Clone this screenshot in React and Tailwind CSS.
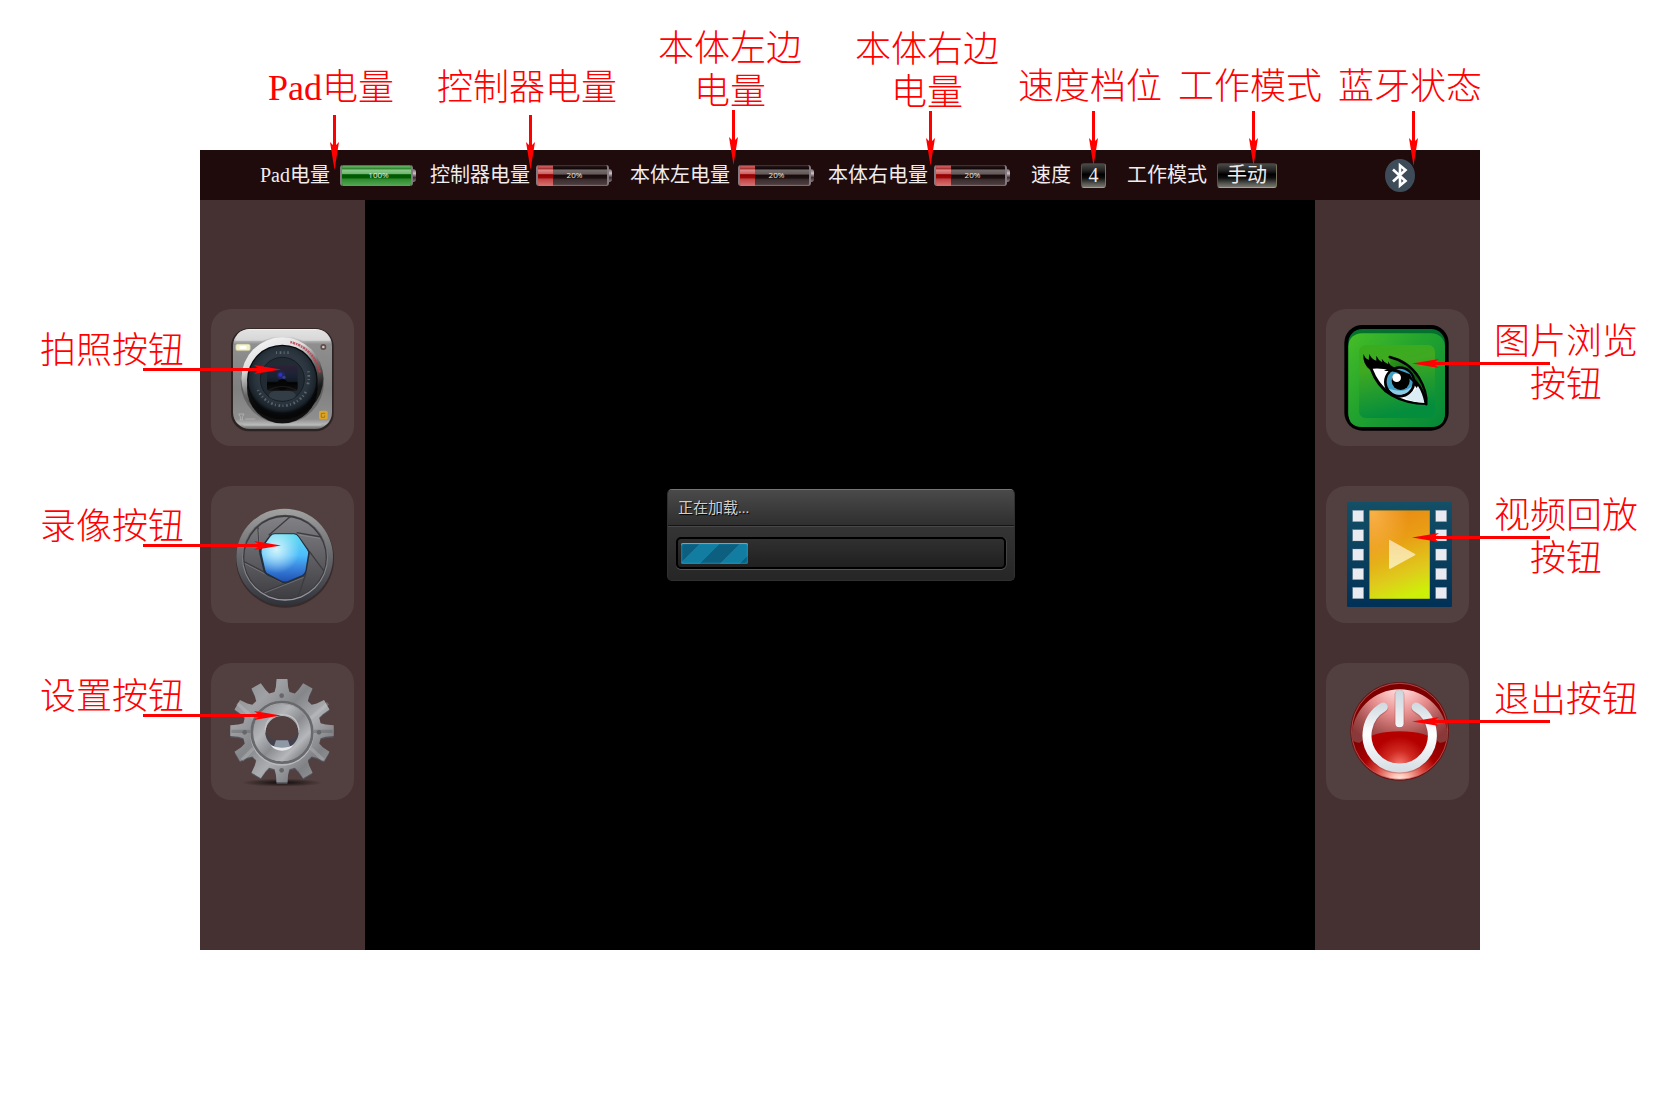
import React from "react";

const TOP_NOTES = [
  { lines: ["Pad电量"], box: "pt-[67px] ml-[68px]", arrow: "mt-[5px]" },
  { lines: ["控制器电量"], box: "pt-[67px] ml-[43px]", arrow: "mt-[5px]" },
  { lines: ["本体左边", "电量"], box: "pt-[28px] ml-[41px]", arrow: "-mt-1" },
  { lines: ["本体右边", "电量"], box: "pt-[29px] ml-[53px]", arrow: "-mt-1" },
  { lines: ["速度档位"], box: "pt-[66px] ml-[19px]", arrow: "mt-0.5" },
  { lines: ["工作模式"], box: "pt-[66px] ml-4", arrow: "mt-0.5" },
  { lines: ["蓝牙状态"], box: "pt-[66px] ml-4", arrow: "mt-0.5" },
];

function DownArrow({ className }) {
  return (
    <svg className={`ml-[7px] block h-[55px] w-[9px] ${className}`} viewBox="0 0 9 55" aria-hidden="true">
      <path d="M3 0h3v30l3-3-4.500 28L0 27l3 3z" fill="#f00" />
    </svg>
  );
}

function SideArrow({ flip, className }) {
  return (
    <svg
      className={`pointer-events-none absolute h-[9px] w-[138px] ${className}`}
      viewBox="0 0 138 9"
      aria-hidden="true"
    >
      <path
        d={flip ? "M138 3v3H23l4 3L0 4.500 27 0l-4 3z" : "M0 3v3h115l-4 3 27-4.500L111 0l4 3z"}
        fill="#f00"
      />
    </svg>
  );
}

function Battery({ value, label }) {
  const full = value > 50;
  const fill = full
    ? "bg-[linear-gradient(180deg,#247a24_0%,#63b063_8%,#2c842c_18%,#8cc98c_24%,#70b570_42%,#005a00_46%,#005a00_60%,#2f8a2f_68%,#55a955_100%)]"
    : "bg-[linear-gradient(180deg,#8e2020_0%,#d06060_8%,#a33030_18%,#e08d8d_24%,#cf6060_42%,#900000_46%,#a00808_60%,#c04444_68%,#d87474_100%)]";
  return (
    <div
      role="meter"
      aria-label={label}
      aria-valuenow={value}
      aria-valuemin={0}
      aria-valuemax={100}
      className="flex h-[21px] w-[76px] shrink-0 items-center"
    >
      <div className="relative h-[21px] w-[73px] overflow-hidden rounded-[3px] border-x-2 border-[#83797e] bg-[linear-gradient(180deg,#4a3f41_0%,#1d1011_8%,#120708_18%,#736b6b_24%,#645858_44%,#150a0b_47%,#1d1011_62%,#3c2e30_70%,#4b3c3e_92%,#8a7f80_100%)]">
        <div className={`h-full ${fill}`} style={{ width: `${full ? 100 : value + 2}%` }} />
        <span className="absolute inset-0 flex items-center justify-center pl-1 font-['Open_Sans',sans-serif] text-[8px] leading-none text-[#eee8e8]">
          {value}%
        </span>
      </div>
      <div className="h-[13px] w-[3px] rounded-r-[3px] bg-[linear-gradient(180deg,#6e6266,#c9bfc6,#3a2c30,#8d8288)]" />
    </div>
  );
}

function CameraIcon() {
  return (
    <svg viewBox="543 57 429 411" className="size-full" aria-hidden="true">
      <defs>
        <linearGradient id="camBody" x1="0" y1="0" x2="0" y2="1">
          <stop offset="0" stopColor="#f2f2f2" />
          <stop offset=".1" stopColor="#c9c9c9" />
          <stop offset=".15" stopColor="#8f8f8f" />
          <stop offset=".6" stopColor="#808080" />
          <stop offset=".9" stopColor="#8f8f8f" />
          <stop offset=".95" stopColor="#b5b5b5" />
          <stop offset="1" stopColor="#6a6a6a" />
        </linearGradient>
        <linearGradient id="camRing" x1="0" y1="0" x2=".45" y2="1">
          <stop offset="0" stopColor="#ffffff" />
          <stop offset=".35" stopColor="#dedede" />
          <stop offset=".6" stopColor="#6d6d6d" />
          <stop offset=".85" stopColor="#1a1a1a" />
        </linearGradient>
        <radialGradient id="camLens" cx=".5" cy=".45" r=".55">
          <stop offset="0" stopColor="#1b222a" />
          <stop offset=".6" stopColor="#2f3943" />
          <stop offset=".75" stopColor="#28323b" />
          <stop offset=".9" stopColor="#1c242b" />
          <stop offset="1" stopColor="#05070a" />
        </radialGradient>
        <linearGradient id="camCore" x1="0" y1="0" x2="0" y2="1">
          <stop offset="0" stopColor="#2d2138" />
          <stop offset=".4" stopColor="#182233" />
          <stop offset=".62" stopColor="#141b24" />
          <stop offset=".68" stopColor="#020203" />
          <stop offset="1" stopColor="#101010" />
        </linearGradient>
      </defs>
      <rect x="603" y="115" width="308" height="309" rx="54" fill="#2c2323" />
      <rect x="609" y="117" width="297" height="300" rx="50" fill="url(#camBody)" />
      <path d="M616 152h82l30-12h60l30 12h82q-4-32-40-33H654q-36 2-38 33z" fill="#dedede" opacity=".75" />
      <circle cx="757" cy="276" r="125" fill="#000" opacity=".25" />
      <circle cx="757" cy="265" r="123" fill="url(#camRing)" />
      <circle cx="757" cy="294" r="106" fill="#050505" opacity=".9" />
      <circle cx="757" cy="270" r="106" fill="#080b0e" />
      <circle cx="757" cy="270" r="102" fill="url(#camLens)" />
      <path d="M684 300a80 80 0 0 0 146 0M738 188h38M835 244q4 22-3 44" fill="none" stroke="#9aa4ae" strokeWidth="8" strokeDasharray="3 8 5 7" opacity=".45" />
      <circle cx="757" cy="268" r="66" fill="#222b33" stroke="#161c22" strokeWidth="3" />
      <ellipse cx="757" cy="316" rx="40" ry="16" fill="#333d46" />
      <rect x="711" y="228" width="92" height="74" rx="8" fill="url(#camCore)" />
      <circle cx="757" cy="284" r="17" fill="#060606" />
      <path d="M716 300q41-22 82 0" fill="none" stroke="#262626" strokeWidth="2" />
      <circle cx="753" cy="256" r="12" fill="#232a78" opacity=".6" />
      <circle cx="751" cy="254" r="6" fill="#3030cc" />
      <circle cx="762" cy="262" r="5" fill="#373e8d" />
      <path d="M781 156q70 18 89 92" fill="none" stroke="#bd3c49" strokeWidth="7" strokeDasharray="5 2 8 2" opacity=".8" />
      <rect x="617" y="162" width="44" height="20" rx="6" fill="#f1f0c6" stroke="#b9b79a" strokeWidth="2" />
      <rect x="628" y="167" width="22" height="10" rx="4" fill="#fffff5" />
      <circle cx="880" cy="171" r="9" fill="#5a4f4f" />
      <circle cx="880" cy="171" r="4" fill="#e7bcbc" />
      <rect x="867" y="362" width="26" height="26" rx="5" fill="#dba42a" />
      <path d="M886 370h-12v12h10v-6" fill="none" stroke="#a8770f" strokeWidth="3" />
      <path d="M626 372h16l-5 8v10h-6v-10zM646 387h30" fill="none" stroke="#bdbdbd" strokeWidth="2" />
      <path d="M640 405h234" stroke="#cfcfcf" strokeWidth="2" />
    </svg>
  );
}

function ApertureIcon() {
  return (
    <svg viewBox="543 48 429 411" className="size-full" aria-hidden="true">
      <defs>
        <linearGradient id="apRim" x1="0" y1="0" x2="0" y2="1">
          <stop offset="0" stopColor="#a2a2a2" />
          <stop offset=".5" stopColor="#66676b" />
          <stop offset="1" stopColor="#30323a" />
        </linearGradient>
        <linearGradient id="apInnerRim" x1="0" y1="0" x2="0" y2="1">
          <stop offset="0" stopColor="#5a5a5d" />
          <stop offset="1" stopColor="#9a9a9e" />
        </linearGradient>
        <linearGradient id="apBlade" x1="0" y1="0" x2="0" y2="1">
          <stop offset="0" stopColor="#828286" />
          <stop offset=".5" stopColor="#5f5f64" />
          <stop offset="1" stopColor="#3d3d42" />
        </linearGradient>
        <linearGradient id="apBlue" x1="0" y1="0" x2="0" y2="1">
          <stop offset="0" stopColor="#62dcf0" />
          <stop offset=".45" stopColor="#4cbcfb" />
          <stop offset=".7" stopColor="#3a86de" />
          <stop offset="1" stopColor="#2052b4" />
        </linearGradient>
        <radialGradient id="apGlow" cx=".32" cy=".32" r=".5">
          <stop offset="0" stopColor="#d5f4fb" />
          <stop offset="1" stopColor="#d5f4fb" stopOpacity="0" />
        </radialGradient>
      </defs>
      <circle cx="765" cy="266" r="147" fill="#2d2424" opacity=".7" />
      <circle cx="764" cy="261" r="145" fill="url(#apRim)" />
      <circle cx="765" cy="263" r="129" fill="url(#apInnerRim)" />
      <circle cx="765" cy="262" r="126" fill="#3a3a3f" />
      <circle cx="765" cy="263" r="122" fill="url(#apBlade)" />
      <g fill="none" stroke="#3c3c41" strokeWidth="4">
        <path d="M782 139 716 196M684 172l5 74M800 188l74 13M838 244l43 58M828 310l-24 70M826 317 700 366M764 338 642 275" />
      </g>
      <g fill="none" stroke="#9a9a9e" strokeWidth="2" opacity=".7">
        <path d="M790 192l80 13M821 322 703 369M755 338 644 280M686 178l5 60" />
      </g>
      <path d="M734 190h60q8 1 12 7l30 42q5 6 3 13l-9 52q-2 10-11 15l-45 19q-9 3-18 0l-42-20q-10-4-13-13l-13-53q-2-9 2-18l28-37q6-7 16-7z" fill="#24303d" />
      <path d="M735 193h57q8 1 13 8l26 38q5 6 3 14l-8 49q-2 8-9 13l-43 18q-9 3-18 0l-38-20q-10-4-12-12l-11-51q-2-9 2-16l24-34q5-7 14-7z" fill="url(#apBlue)" />
      <path d="M735 193h57q8 1 13 8l26 38q5 6 3 14l-8 49q-2 8-9 13l-43 18q-9 3-18 0l-38-20q-10-4-12-12l-11-51q-2-9 2-16l24-34q5-7 14-7z" fill="url(#apGlow)" />
    </svg>
  );
}

function gearPath(cx, cy) {
  const points = [];
  for (let i = 0; i < 12; i += 1) {
    const mid = (i * 30 - 90) * (Math.PI / 180);
    [
      [-11, 118],
      [-8, 132],
      [-6, 156],
      [6, 156],
      [8, 132],
      [11, 118],
    ].forEach(([deg, r]) => {
      const a = mid + (deg * Math.PI) / 180;
      points.push(`${(cx + r * Math.cos(a)).toFixed(1)} ${(cy + r * Math.sin(a)).toFixed(1)}`);
    });
  }
  return `M${points.join("L")}z`;
}

function GearIcon() {
  return (
    <svg viewBox="543 39 429 411" className="size-full" aria-hidden="true">
      <defs>
        <linearGradient id="gearMetal" x1="0" y1="0" x2="1" y2="1">
          <stop offset="0" stopColor="#87888c" />
          <stop offset=".25" stopColor="#a0a1a5" />
          <stop offset=".42" stopColor="#85868a" />
          <stop offset=".6" stopColor="#acadb1" />
          <stop offset=".78" stopColor="#808185" />
          <stop offset="1" stopColor="#a6a7ab" />
        </linearGradient>
        <linearGradient id="gearRing" x1="0" y1="0" x2="1" y2="1">
          <stop offset="0" stopColor="#929397" />
          <stop offset=".3" stopColor="#b4b5b9" />
          <stop offset=".55" stopColor="#8b8c90" />
          <stop offset=".8" stopColor="#b6b7bb" />
          <stop offset="1" stopColor="#7d7e82" />
        </linearGradient>
        <radialGradient id="gearShade">
          <stop offset="0" stopColor="#120c0c" />
          <stop offset="1" stopColor="#120c0c" stopOpacity="0" />
        </radialGradient>
      </defs>
      <ellipse cx="756" cy="398" rx="120" ry="12" fill="url(#gearShade)" />
      <path
        fillRule="evenodd"
        d={`${gearPath(756, 246)}M707 246a49 49 0 1 0 98 0a49 49 0 1 0-98 0z`}
        fill="#54555e"
      />
      <path
        fillRule="evenodd"
        d={`${gearPath(756, 242)}M707 246a49 49 0 1 0 98 0a49 49 0 1 0-98 0z`}
        fill="url(#gearMetal)"
      />
      <path d="M670 205 622 160M842 205l52-45M670 295l-34 35M842 295l38 35" stroke="#d5d6da" strokeWidth="10" opacity=".25" />
      <path d="M604 244h58M850 244h58" stroke="#55565a" strokeWidth="10" opacity=".35" />
      <circle cx="756" cy="252" r="93" fill="none" stroke="#b9babd" strokeWidth="4" />
      <circle cx="756" cy="247" r="91" fill="none" stroke="#68696c" strokeWidth="8" />
      <circle cx="756" cy="248" r="68" fill="none" stroke="url(#gearRing)" strokeWidth="36" />
      <path d="M706 246q10 20 26 25h48q16-5 26-25a50 50 0 0 1-100 0z" fill="#41424d" />
      <path d="M738 271h36l6 18q-24 10-48 0z" fill="#8f98a5" />
      <path d="M722 286q34 14 68 0-12 16-34 16t-34-16z" fill="#e6e8ea" />
      <path d="M705 240q6-46 51-46t51 46" fill="none" stroke="#c3c4c7" strokeWidth="4" />
      <g fill="#66676a">
        <circle cx="755" cy="137" r="7" />
        <circle cx="644" cy="247" r="7" />
        <circle cx="867" cy="247" r="7" />
        <circle cx="755" cy="361" r="7" />
      </g>
    </svg>
  );
}

function EyeIcon() {
  return (
    <svg viewBox="48 57 429 411" className="size-full" aria-hidden="true">
      <defs>
        <linearGradient id="eyeOuter" x1="0" y1="0" x2="1" y2=".9">
          <stop offset="0" stopColor="#46be26" />
          <stop offset=".45" stopColor="#23a32e" />
          <stop offset="1" stopColor="#068a38" />
        </linearGradient>
        <linearGradient id="eyeInner" x1="0" y1="0" x2=".25" y2="1">
          <stop offset="0" stopColor="#38ad1c" />
          <stop offset=".35" stopColor="#3fa921" />
          <stop offset="1" stopColor="#048d3d" />
        </linearGradient>
        <linearGradient id="eyeLid" x1="0" y1="0" x2="1" y2="1">
          <stop offset="0" stopColor="#2f9a1b" />
          <stop offset=".6" stopColor="#0c5a14" />
          <stop offset="1" stopColor="#1f8f28" />
        </linearGradient>
      </defs>
      <rect x="103" y="105" width="313" height="317" rx="54" fill="#000" />
      <rect x="115" y="117" width="290" height="294" rx="42" fill="#04712f" />
      <path d="M115 169q2-37 42-39h206q38 2 42 39v200q0 42-42 42H157q-42 0-42-42z" fill="url(#eyeOuter)" />
      <rect x="147" y="165" width="228" height="219" rx="20" fill="url(#eyeInner)" />
      <path d="M238 201q56 14 86 60 28 44 27 84-20-68-60-92-24-16-50-26z" fill="url(#eyeLid)" />
      <path d="M160 192q4 12 16 18l2-18q6 16 21 20v-15q6 14 18 20l-2-11q8 12 20 17l-1-9q5 12 16 17 72 20 97 86l4 28q-64 0-108-26-44-26-63-80-22-16-20-47z" fill="#000" />
      <path d="M188 236q46-4 92 20 40 24 63 82-58 0-104-32-34-26-51-70z" fill="#fff" />
      <path d="M276 318q30-2 48-30 14 22 19 50-38 0-67-20z" fill="#dcedf6" />
      <circle cx="269" cy="276" r="47" fill="#000" />
      <circle cx="269" cy="275" r="39" fill="#3f9fc4" />
      <path d="M236 296a39 39 0 0 0 70-8q-20 24-70 8z" fill="#8fcbe2" />
      <circle cx="272" cy="273" r="27" fill="#000" />
      <path d="M222 243q56-4 96 42l-18-32-58-22z" fill="#000" />
      <circle cx="260" cy="263" r="13" fill="#fff" />
      <path d="M239 201q58 14 88 62 26 44 22 80" fill="none" stroke="#000" strokeWidth="7" strokeLinecap="round" />
    </svg>
  );
}

function FilmIcon() {
  return (
    <svg viewBox="48 48 429 411" className="size-full" aria-hidden="true">
      <defs>
        <linearGradient id="filmBase" x1="0" y1="0" x2="0" y2="1">
          <stop offset="0" stopColor="#134f66" />
          <stop offset="1" stopColor="#013156" />
        </linearGradient>
        <linearGradient id="filmFrame" x1=".3" y1="0" x2=".55" y2="1">
          <stop offset="0" stopColor="#e98a14" />
          <stop offset=".35" stopColor="#e99d14" />
          <stop offset=".75" stopColor="#dfcb1c" />
          <stop offset="1" stopColor="#cdf008" />
        </linearGradient>
        <radialGradient id="filmGlow" cx=".05" cy=".02" r=".6">
          <stop offset="0" stopColor="#ffc25c" stopOpacity=".7" />
          <stop offset="1" stopColor="#ffc25c" stopOpacity="0" />
        </radialGradient>
        <linearGradient id="filmPlay" x1="0" y1="0" x2="0" y2="1">
          <stop offset="0" stopColor="#f8d99d" />
          <stop offset="1" stopColor="#f7eba6" />
        </linearGradient>
      </defs>
      <rect x="111" y="96" width="315" height="315" rx="3" fill="url(#filmBase)" />
      <rect x="177" y="120" width="183" height="267" fill="#59683a" />
      <rect x="179" y="122" width="180" height="264" fill="url(#filmFrame)" />
      <rect x="179" y="122" width="180" height="264" fill="url(#filmGlow)" />
      {[121, 179, 237, 295, 352].map((y) => (
        <g key={y} fill="#e9ebf1" stroke="#71859a" strokeWidth="1">
          <rect x="128" y={y} width="33" height="34" />
          <rect x="377" y={y} width="33" height="34" />
        </g>
      ))}
      <path d="M240 210l75 42q3 2 0 4l-74 40q-4 2-4-3v-80q0-5 3-3z" fill="url(#filmPlay)" />
    </svg>
  );
}

function PowerIcon() {
  return (
    <svg viewBox="48 39 429 411" className="size-full" aria-hidden="true">
      <defs>
        <radialGradient id="pwBase" gradientUnits="userSpaceOnUse" cx="269" cy="394" r="190">
          <stop offset="0" stopColor="#fff4ec" />
          <stop offset=".12" stopColor="#ffc4b8" />
          <stop offset=".4" stopColor="#d8453c" />
          <stop offset=".62" stopColor="#a80000" />
          <stop offset="1" stopColor="#7d0000" />
        </radialGradient>
        <radialGradient id="pwGloss" gradientUnits="userSpaceOnUse" cx="269" cy="96" r="200">
          <stop offset="0" stopColor="#fff2f2" />
          <stop offset=".25" stopColor="#f9c0c0" />
          <stop offset=".5" stopColor="#e58b8b" />
          <stop offset=".8" stopColor="#a85252" />
          <stop offset="1" stopColor="#8b3838" />
        </radialGradient>
        <radialGradient id="pwInner" gradientUnits="userSpaceOnUse" cx="269" cy="345" r="85">
          <stop offset="0" stopColor="#f77a70" />
          <stop offset=".5" stopColor="#d02a22" />
          <stop offset="1" stopColor="#b50000" />
        </radialGradient>
        <linearGradient id="pwWhite" gradientUnits="userSpaceOnUse" x1="0" y1="155" x2="0" y2="370">
          <stop offset="0" stopColor="#ccd7df" />
          <stop offset=".45" stopColor="#ffffff" />
          <stop offset="1" stopColor="#d3dce2" />
        </linearGradient>
        <linearGradient id="pwBar" x1="0" y1="0" x2="0" y2="1">
          <stop offset="0" stopColor="#cbd6dd" />
          <stop offset="1" stopColor="#f4f6f8" />
        </linearGradient>
      </defs>
      <circle cx="269" cy="244" r="148" fill="#6b1313" />
      <circle cx="269" cy="244" r="144" fill="url(#pwBase)" stroke="#c86a6a" strokeWidth="2" />
      <circle cx="269" cy="258" r="88" fill="url(#pwInner)" />
      <path d="M125 262a144 144 0 1 1 288 0q-2 17-24 16-40-34-120-34t-120 34q-22 1-24-16z" fill="url(#pwGloss)" />
      <path d="M220 174A98 98 0 1 0 318 174" fill="none" stroke="#7a3030" strokeWidth="29" strokeLinecap="round" opacity=".3" />
      <path d="M220 171A98 98 0 1 0 318 171" fill="none" stroke="url(#pwWhite)" strokeWidth="27" strokeLinecap="round" />
      <rect x="254" y="119" width="29" height="114" rx="14" fill="#7a3030" opacity=".4" />
      <rect x="256" y="120" width="25" height="112" rx="12" fill="url(#pwBar)" />
    </svg>
  );
}

function Tile({ label, children }) {
  return (
    <button type="button" aria-label={label} className="block h-[137px] w-[143px] rounded-[20px] bg-[#523f3f]">
      {children}
    </button>
  );
}

function Readout({ label, className, children }) {
  return (
    <output
      aria-label={label}
      className={`flex h-[25px] items-center justify-center rounded-[3px] border border-t-[#3a3a36] border-r-[#77735f] border-b-[#a5a184] border-l-[#55534a] bg-[linear-gradient(180deg,#4a4a48_0%,#222_28%,#000_45%,#0c0c0c_60%,#555550_85%,#777770_100%)] ${className}`}
    >
      {children}
    </output>
  );
}

function StatusBar() {
  return (
    <header className="flex h-[50px] items-center whitespace-nowrap bg-[#1f0a0c] pl-[60px] text-xl leading-6 text-[#f0ecec]">
      <span className="mr-2.5">Pad电量</span>
      <Battery value={100} label="Pad电量" />
      <span className="mr-1.5 ml-3.5">控制器电量</span>
      <Battery value={20} label="控制器电量" />
      <span className="mr-2 ml-[18px]">本体左电量</span>
      <Battery value={20} label="本体左电量" />
      <span className="mr-1.5 ml-3.5">本体右电量</span>
      <Battery value={20} label="本体右电量" />
      <span className="mr-2.5 ml-[21px]">速度</span>
      <Readout label="速度" className="w-[25px]">4</Readout>
      <span className="mr-2.5 ml-[21px]">工作模式</span>
      <Readout label="工作模式" className="w-[60px]">手动</Readout>
      <svg className="mr-[65px] ml-auto h-[33px] w-[30px] shrink-0" viewBox="0 0 30 33" role="img" aria-label="蓝牙">
        <ellipse cx="15" cy="16.500" rx="15" ry="16.500" fill="#3e4c5a" />
        <path d="M8 10.500 20.500 22 15 26.500V6.500L20.500 11 8 22.500" fill="none" stroke="#fff" strokeWidth="2.600" />
      </svg>
    </header>
  );
}

function LoadingDialog() {
  return (
    <section
      role="dialog"
      aria-label="正在加载"
      className="mt-[289px] ml-0.5 h-[92px] w-[348px] rounded-[5px] border border-[#303030] border-t-[#757575] bg-[#2b2a2b]"
    >
      <h2 className="flex h-9 items-center rounded-t-[4px] border-b border-[#141414] bg-linear-to-b from-[#4a4a4a] to-[#2f2f2f] pl-2.5 text-[15px] leading-5 font-normal text-[#cfcfcf] [text-shadow:1px_1px_1px_#000]">
        正在加载...
      </h2>
      <div className="h-[54px] rounded-b-[4px] border-t border-[#474747] bg-linear-to-b from-[#353435] to-[#262626] px-2 pt-2.5">
        <div
          role="progressbar"
          aria-valuenow={20}
          aria-valuemin={0}
          aria-valuemax={100}
          className="h-8 rounded-[5px] border-2 border-black bg-linear-to-b from-[#303030] to-[#202020] px-[3px] py-1 shadow-[0_1px_0_#555,1px_0_0_#444]"
        >
          <div className="h-[21px] w-[21%] rounded-[2px] bg-[repeating-linear-gradient(135deg,#0d5f80_0,#0d5f80_14px,#127da0_14px,#127da0_28px)] shadow-[inset_0_1px_0_#1fc4f0,inset_0_0_3px_#14a6d8]" />
        </div>
      </div>
    </section>
  );
}

export default function App() {
  return (
    <div className="grid min-h-screen grid-cols-[200px_minmax(0,1fr)_200px] grid-rows-[150px_auto] content-start overflow-x-hidden bg-white font-['Liberation_Serif','Noto_Sans_CJK_SC',serif]">
      <div className="relative z-10 col-start-2 flex items-start text-4xl leading-[43px] font-light whitespace-nowrap text-[#f00]">
        {TOP_NOTES.map((note) => (
          <div key={note.lines.join("")} className={`flex shrink-0 flex-col items-center ${note.box}`}>
            {note.lines.map((line) => (
              <span key={line} className="h-[43px]">{line}</span>
            ))}
            <DownArrow className={note.arrow} />
          </div>
        ))}
      </div>

      <aside className="relative z-10 col-start-1 row-start-2 pt-[180px] pl-10 text-4xl leading-[43px] font-light whitespace-nowrap text-[#f00]">
        <p className="relative mb-[133px]">拍照按钮<SideArrow className="top-[35px] left-[103px]" /></p>
        <p className="relative mb-[127px]">录像按钮<SideArrow className="top-[35px] left-[103px]" /></p>
        <p className="relative">设置按钮<SideArrow className="top-[35px] left-[103px]" /></p>
      </aside>

      <div className="col-start-2 row-start-2">
        <StatusBar />
        <div className="flex min-h-[750px]">
          <nav className="flex w-[165px] shrink-0 flex-col items-center gap-10 bg-[#463132] pt-[109px]">
            <Tile label="拍照"><CameraIcon /></Tile>
            <Tile label="录像"><ApertureIcon /></Tile>
            <Tile label="设置"><GearIcon /></Tile>
          </nav>
          <main className="flex flex-1 items-start justify-center bg-black">
            <LoadingDialog />
          </main>
          <nav className="flex w-[165px] shrink-0 flex-col items-center gap-10 bg-[#463132] pt-[109px]">
            <Tile label="图片浏览"><EyeIcon /></Tile>
            <Tile label="视频回放"><FilmIcon /></Tile>
            <Tile label="退出"><PowerIcon /></Tile>
          </nav>
        </div>
      </div>

      <aside className="relative z-10 col-start-3 row-start-2 flex flex-col items-start pt-[171px] pl-3.5 text-center text-4xl leading-[43px] font-light whitespace-nowrap text-[#f00]">
        <p className="relative mb-[88px]">图片浏览<br />按钮<SideArrow flip className="top-[38px] -left-[82px]" /></p>
        <p className="relative mb-[98px]">视频回放<br />按钮<SideArrow flip className="top-[38px] -left-[82px]" /></p>
        <p className="relative">退出按钮<SideArrow flip className="top-[38px] -left-[82px]" /></p>
      </aside>
    </div>
  );
}
